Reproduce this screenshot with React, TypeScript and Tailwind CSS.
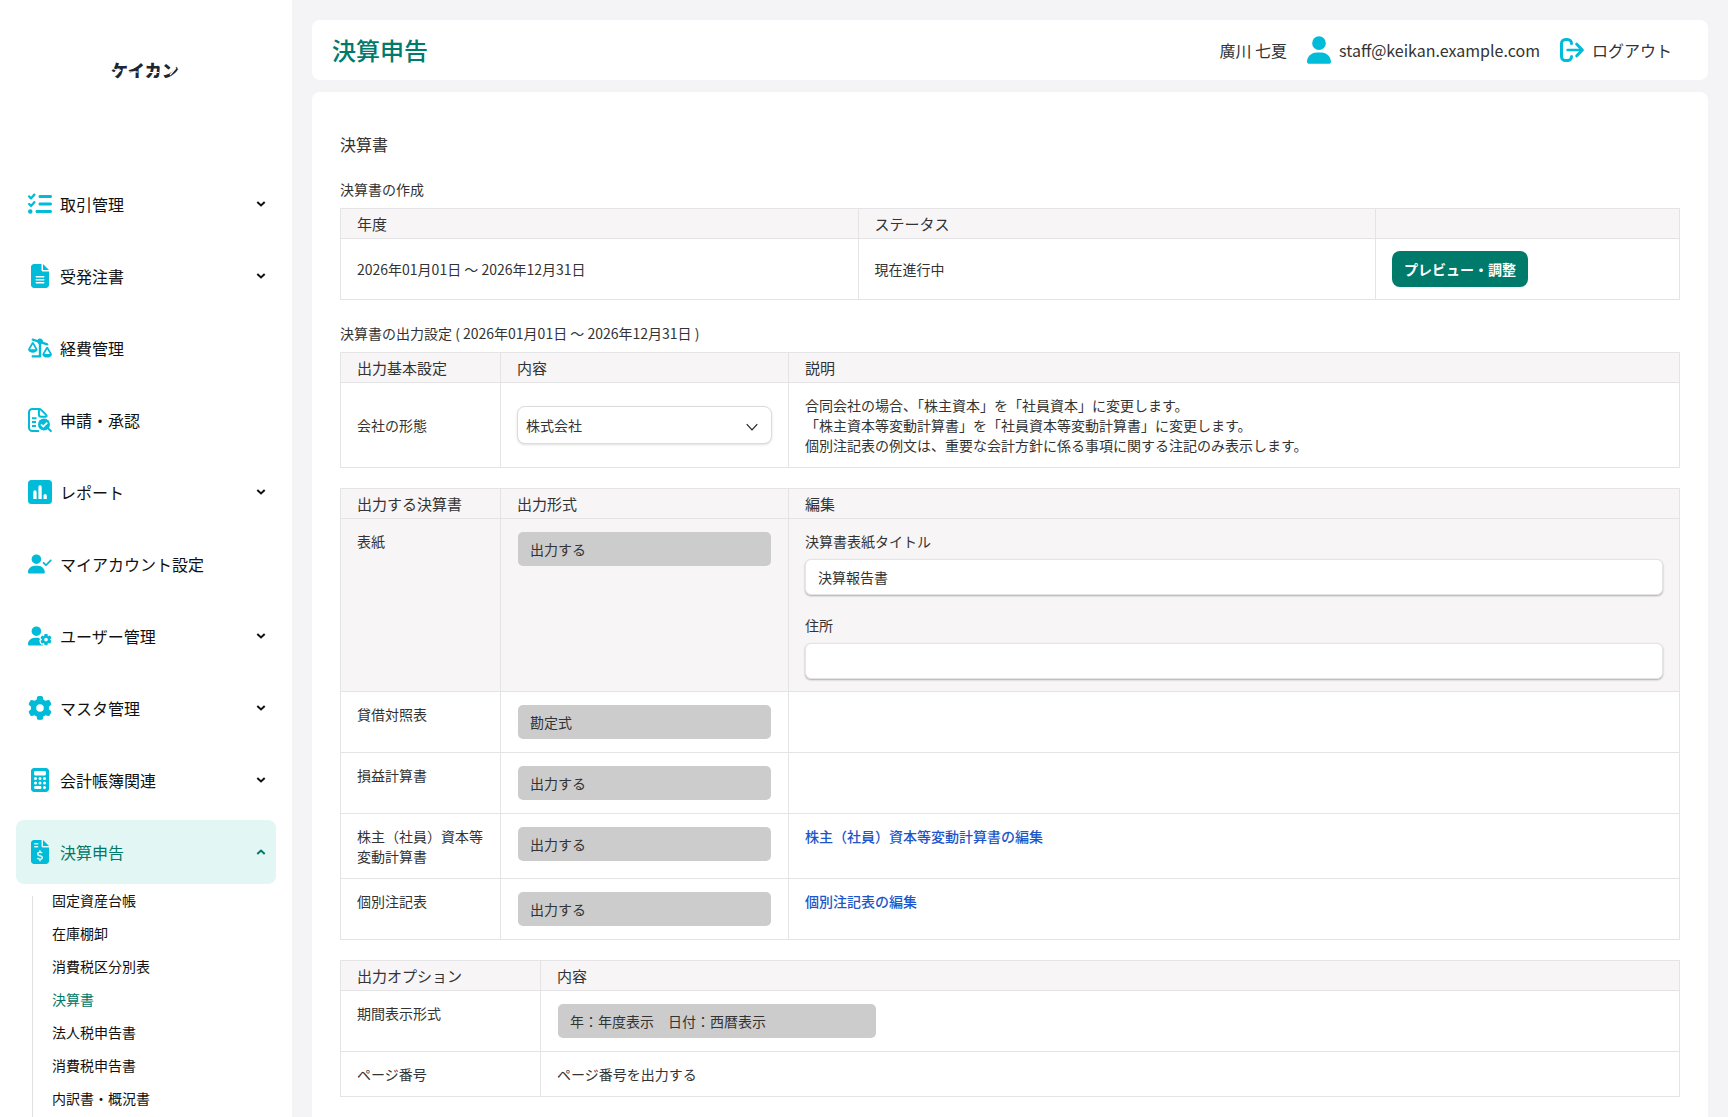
import type { ReactNode } from "react";
import {
  FaCalculator,
  FaFileInvoiceDollar,
  FaFileLines,
  FaGear,
  FaListCheck,
  FaScaleUnbalancedFlip,
  FaUser,
  FaUserCheck,
  FaUserGear,
} from "react-icons/fa6";

function ReportIcon() {
  return (
    <svg viewBox="0 0 24 24" className="size-6" fill="currentColor" aria-hidden="true">
      <path
        fillRule="evenodd"
        d="M3.500 0h17A3.500 3.500 0 0 1 24 3.500v17a3.500 3.500 0 0 1-3.500 3.500h-17A3.500 3.500 0 0 1 0 20.500v-17A3.500 3.500 0 0 1 3.500 0ZM5.300 12v7h3.300v-7a1.650 1.650 0 0 0-3.300 0ZM10.400 7v12h3.300V7a1.650 1.650 0 0 0-3.300 0ZM15.500 15.600V19h3.300v-3.400a1.650 1.650 0 0 0-3.300 0Z"
      />
    </svg>
  );
}

function DocumentSearchIcon() {
  return (
    <svg viewBox="0 0 24 24" className="size-6" fill="none" stroke="currentColor" strokeWidth="2" aria-hidden="true">
      <path d="M11 23H4.200A3.200 3.200 0 0 1 1 19.800V4.200A3.200 3.200 0 0 1 4.200 1h6.900c1 0 1.500.3 2.100.9l4.700 4.700c.5.600.8 1.200.8 2.200" />
      <path d="M10.900 1v5.400a2.300 2.300 0 0 0 2.300 2.300h5.400" />
      <path d="M4 10.200h4.500M4 14h4M4 18h4" />
      <circle cx="16" cy="16.500" r="6" fill="currentColor" stroke="none" />
      <path d="m20 20.300 3.500 3.400" />
      <path d="m13 16.400 2.300 2.200 3.900-4" stroke="white" strokeWidth="1.800" />
    </svg>
  );
}

function LogoutIcon() {
  return (
    <svg
      viewBox="0 0 24 24"
      className="size-6"
      fill="none"
      stroke="currentColor"
      strokeWidth="3"
      strokeLinecap="round"
      strokeLinejoin="round"
      aria-hidden="true"
    >
      <path d="M11.500 5.500a4 4 0 0 0-4-4h-2a4 4 0 0 0-4 4v13a4 4 0 0 0 4 4h2a4 4 0 0 0 4-4" />
      <path d="M7.500 12h14.500" strokeWidth="2.400" />
      <path d="m16.800 6.200 5.500 5.800-5.500 5.800" />
    </svg>
  );
}

function Chevron({ up = false }: { up?: boolean }) {
  return (
    <svg viewBox="0 0 10 6" className="w-2.5" fill="none" stroke="currentColor" strokeWidth="2" aria-hidden="true">
      <path d={up ? "M1.300 5 5 1.600 8.700 5" : "M1.300 1 5 4.400 8.700 1"} />
    </svg>
  );
}

type MenuItem = { label: string; icon: ReactNode; expandable: boolean; active?: boolean };

const menu: MenuItem[] = [
  { label: "取引管理", icon: <FaListCheck size={24} />, expandable: true },
  { label: "受発注書", icon: <FaFileLines size={24} />, expandable: true },
  { label: "経費管理", icon: <FaScaleUnbalancedFlip size={24} />, expandable: false },
  { label: "申請・承認", icon: <DocumentSearchIcon />, expandable: false },
  { label: "レポート", icon: <ReportIcon />, expandable: true },
  { label: "マイアカウント設定", icon: <FaUserCheck size={24} />, expandable: false },
  { label: "ユーザー管理", icon: <FaUserGear size={24} />, expandable: true },
  { label: "マスタ管理", icon: <FaGear size={24} />, expandable: true },
  { label: "会計帳簿関連", icon: <FaCalculator size={24} />, expandable: true },
  { label: "決算申告", icon: <FaFileInvoiceDollar size={24} />, expandable: true, active: true },
];

const submenu = [
  "固定資産台帳",
  "在庫棚卸",
  "消費税区分別表",
  "決算書",
  "法人税申告書",
  "消費税申告書",
  "内訳書・概況書",
];

function Sidebar() {
  return (
    <aside className="w-[292px] shrink-0 overflow-hidden bg-white text-[#111]">
      <div className="flex h-[172px] items-start justify-center pt-[58px]">
        <svg viewBox="0 0 72 24" className="h-6 w-[72px]" role="img" aria-label="ケイカン">
          <text x="1" y="19" fontSize="17" fontWeight="900" fill="#1f2630">
            ケイカン
          </text>
          <path
            d="M1 9.500l6 3M6 16l5-4M19 14h9M22 10.500l6-4M37 14.500h12M43 19l3-8M53 12l9 1M60 17l6-7"
            stroke="white"
            strokeWidth="1.200"
          />
        </svg>
      </div>
      <nav>
        <ul className="flex flex-col gap-2 px-4">
          {menu.map((item) => (
            <li key={item.label}>
              <button
                type="button"
                className={
                  item.active
                    ? "flex h-16 w-full items-center gap-2 rounded-lg bg-[#e2f6f3] pr-2.5 pl-3 text-left text-base text-[#007a6b]"
                    : "flex h-16 w-full items-center gap-2 rounded-lg pr-2.5 pl-3 text-left text-base"
                }
              >
                <span className="flex w-6 justify-center text-[#00bcd9]">{item.icon}</span>
                <span className="grow">{item.label}</span>
                {item.expandable && <Chevron up={item.active} />}
              </button>
            </li>
          ))}
        </ul>
        <div className="ml-8 flex gap-[19px]">
          <div className="mt-3 w-px bg-[#e0e0e2]" />
          <ul className="pb-4">
            {submenu.map((label) => (
              <li key={label}>
                <a
                  href="#"
                  className={
                    label === "決算書"
                      ? "block text-sm leading-[33px] text-[#007a6b]"
                      : "block text-sm leading-[33px]"
                  }
                >
                  {label}
                </a>
              </li>
            ))}
          </ul>
        </div>
      </nav>
    </aside>
  );
}

function Th({ children, width = "" }: { children?: ReactNode; width?: string }) {
  return (
    <th
      scope="col"
      className={`${width} h-[30px] border border-[#e4e3e5] bg-[#f7f5f6] px-4 text-left text-[15px] leading-6 font-normal`}
    >
      {children}
    </th>
  );
}

function Td({ children, top = false }: { children?: ReactNode; top?: boolean }) {
  return (
    <td className={`${top ? "align-top" : "align-middle"} border border-[#e4e3e5] px-4 py-3 text-sm leading-5`}>
      {children}
    </td>
  );
}

function LockedSelect({ label, value, wide = false }: { label: string; value: string; wide?: boolean }) {
  return (
    <select
      disabled
      aria-label={label}
      className={`${wide ? "w-80" : "w-full"} block h-9 appearance-none rounded-md border border-transparent bg-[#ccc] bg-clip-padding px-3 text-sm leading-5 text-[#333] opacity-100`}
    >
      <option>{value}</option>
    </select>
  );
}

function TextField({ id, label, value }: { id: string; label: string; value: string }) {
  return (
    <div>
      <label htmlFor={id} className="block">
        {label}
      </label>
      <input
        id={id}
        type="text"
        defaultValue={value}
        className="mt-2 block h-9 w-full rounded-md border border-[#e4e3e5] bg-white px-3 text-sm shadow-[0_1px_2px_rgba(0,0,0,0.3)]"
      />
    </div>
  );
}

const statements = [
  { name: "貸借対照表", format: "勘定式" },
  { name: "損益計算書", format: "出力する" },
  { name: "株主（社員）資本等変動計算書", format: "出力する", link: "株主（社員）資本等変動計算書の編集" },
  { name: "個別注記表", format: "出力する", link: "個別注記表の編集" },
];

export default function App() {
  return (
    <div
      lang="ja"
      className="flex h-screen overflow-hidden bg-[#f4f4f7] font-['Noto_Sans_CJK_JP',sans-serif] text-[#333]"
    >
      <Sidebar />
      <div className="flex min-w-0 grow flex-col gap-3 px-5 pt-5">
        <header className="flex h-[60px] shrink-0 items-center justify-between rounded-lg bg-white pr-9 pl-5">
          <h1 className="text-2xl font-medium text-[#007a6b]">決算申告</h1>
          <div className="flex items-center gap-5">
            <span>廣川 七夏</span>
            <div className="flex items-center gap-2">
              <FaUser className="h-7 w-6 text-[#00bcd9]" />
              <span>staff@keikan.example.com</span>
            </div>
            <button type="button" className="flex items-center gap-2">
              <span className="text-[#00bcd9]">
                <LogoutIcon />
              </span>
              ログアウト
            </button>
          </div>
        </header>

        <main className="min-h-0 grow overflow-hidden rounded-t-lg bg-white px-7 pt-10">
          <h2 className="text-base leading-6">決算書</h2>

          <h3 className="mt-[22px] mb-2 text-sm leading-[22px]">決算書の作成</h3>
          <table className="w-full table-fixed border-collapse">
            <thead>
              <tr>
                <Th>年度</Th>
                <Th>ステータス</Th>
                <Th width="w-[304px]" />
              </tr>
            </thead>
            <tbody>
              <tr>
                <Td>2026年01月01日 〜 2026年12月31日</Td>
                <Td>現在進行中</Td>
                <Td>
                  <button
                    type="button"
                    className="block h-9 rounded-lg bg-[#007a6b] px-3 text-sm font-bold text-white shadow-xs"
                  >
                    プレビュー・調整
                  </button>
                </Td>
              </tr>
            </tbody>
          </table>

          <h3 className="mt-[22px] mb-2 text-sm leading-[22px]">
            決算書の出力設定 ( 2026年01月01日 〜 2026年12月31日 )
          </h3>
          <table className="w-full table-fixed border-collapse">
            <thead>
              <tr>
                <Th width="w-40">出力基本設定</Th>
                <Th width="w-72">内容</Th>
                <Th>説明</Th>
              </tr>
            </thead>
            <tbody>
              <tr>
                <Td>
                  <label htmlFor="company-type">会社の形態</label>
                </Td>
                <Td>
                  <div className="grid items-center">
                    <select
                      id="company-type"
                      className="col-start-1 row-start-1 h-[38px] w-full appearance-none rounded-lg border border-[#dcdcde] bg-white px-2 text-sm shadow-sm"
                    >
                      <option>株式会社</option>
                      <option>合同会社</option>
                    </select>
                    <svg
                      viewBox="0 0 12 8"
                      className="pointer-events-none col-start-1 row-start-1 mt-1 mr-3.5 w-3 justify-self-end"
                      fill="none"
                      stroke="#222"
                      strokeWidth="1.200"
                      aria-hidden="true"
                    >
                      <path d="m.7 1.200 5.300 5.600 5.300-5.600" />
                    </svg>
                  </div>
                </Td>
                <Td>
                  合同会社の場合、「株主資本」を「社員資本」に変更します。
                  <br />
                  「株主資本等変動計算書」を「社員資本等変動計算書」に変更します。
                  <br />
                  個別注記表の例文は、重要な会計方針に係る事項に関する注記のみ表示します。
                </Td>
              </tr>
            </tbody>
          </table>

          <table className="mt-5 w-full table-fixed border-collapse">
            <thead>
              <tr>
                <Th width="w-40">出力する決算書</Th>
                <Th width="w-72">出力形式</Th>
                <Th>編集</Th>
              </tr>
            </thead>
            <tbody>
              <tr className="bg-[#f7f5f6]">
                <Td top>表紙</Td>
                <Td top>
                  <LockedSelect label="表紙の出力形式" value="出力する" />
                </Td>
                <Td top>
                  <div className="flex flex-col gap-5">
                    <TextField id="cover-title" label="決算書表紙タイトル" value="決算報告書" />
                    <TextField id="address" label="住所" value="" />
                  </div>
                </Td>
              </tr>
              {statements.map((row) => (
                <tr key={row.name}>
                  <Td top>{row.name}</Td>
                  <Td top>
                    <LockedSelect label={`${row.name}の出力形式`} value={row.format} />
                  </Td>
                  <Td top>
                    {row.link && (
                      <a href="#" className="font-medium text-[#1d56c9]">
                        {row.link}
                      </a>
                    )}
                  </Td>
                </tr>
              ))}
            </tbody>
          </table>

          <table className="mt-5 w-full table-fixed border-collapse">
            <thead>
              <tr>
                <Th width="w-[200px]">出力オプション</Th>
                <Th>内容</Th>
              </tr>
            </thead>
            <tbody>
              <tr>
                <Td top>期間表示形式</Td>
                <Td top>
                  <LockedSelect label="期間表示形式" value="年：年度表示　日付：西暦表示" wide />
                </Td>
              </tr>
              <tr>
                <Td>ページ番号</Td>
                <Td>ページ番号を出力する</Td>
              </tr>
            </tbody>
          </table>
        </main>
      </div>
    </div>
  );
}
